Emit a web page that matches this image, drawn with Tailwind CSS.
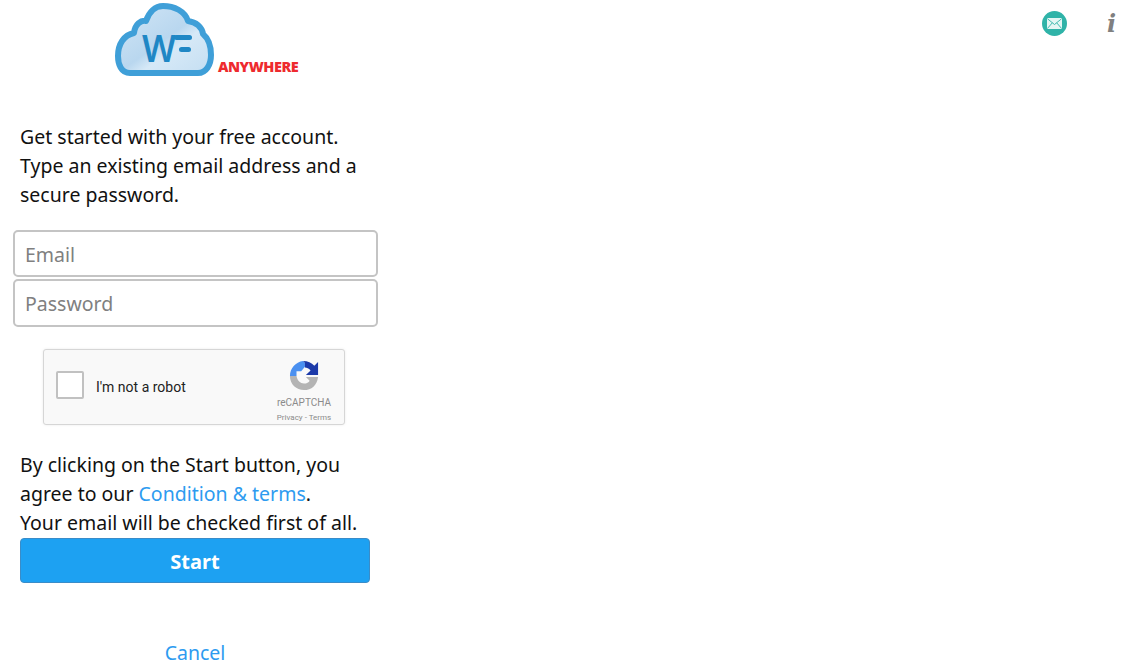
<!DOCTYPE html>
<html lang="en">
<head>
    <meta charset="UTF-8">
    <meta name="viewport" content="width=device-width, initial-scale=1.0">
    <script src="https://cdn.jsdelivr.net/npm/@tailwindcss/browser@4"></script>
    <title>WF Anywhere</title>
</head>
<body class="bg-white overflow-hidden font-['Noto_Sans',sans-serif]">
    <div class="flex h-[671px] w-full">
        <!-- signup column -->
        <div class="w-[391px] shrink-0 flex flex-col">
            <div class="h-[122px] pl-[114px] pt-[2px] flex items-start">
                <svg width="100" height="76" viewBox="0 0 100 76">
                    <defs>
                        <linearGradient id="cloudFill" x1="0" y1="0" x2="1" y2="1">
                            <stop offset="0" stop-color="#d2e6f6"/>
                            <stop offset="0.5" stop-color="#b9d7ef"/>
                            <stop offset="0.62" stop-color="#d6e9f7"/>
                            <stop offset="1" stop-color="#c4def2"/>
                        </linearGradient>
                    </defs>
                    <path d="M16 71C7 71 4 62 4 54C4 42 10 33 20 31C21 22 27 18 32 19C35 10 41 4 49 4C60 4 71 9 74 19C82 20 88 25 89 32C95 37 97 46 97 53C97 63 92 71 84 71Z" fill="url(#cloudFill)" stroke="#3f9fd8" stroke-width="6" stroke-linejoin="round"/>
                    <text x="28" y="60" font-family="Noto Sans" font-weight="600" font-size="38" fill="#1f87c5" textLength="34" lengthAdjust="spacingAndGlyphs">W</text>
                    <rect x="60" y="33" width="18" height="5" rx="2.5" fill="#1f87c5"/>
                    <rect x="65" y="45" width="12" height="5" rx="2.5" fill="#1f87c5"/>
                </svg>
                <span class="mt-[55px] ml-[4px] text-[14.5px] leading-[20px] font-extrabold tracking-[-0.5px] text-[#ee2a2e] font-['Open_Sans',sans-serif]">ANYWHERE</span>
            </div>

            <p class="pl-[20px] text-[19.5px] leading-[29px] text-[#111] w-[370px]">Get started with your free account. Type an existing email address and a secure password.</p>

            <div class="mt-[21px] ml-[13px] w-[365px] flex flex-col gap-[2px]">
                <input type="text" placeholder="Email" class="h-[47px] px-[10px] pt-[2px] border-2 border-[#c4c4c4] rounded-[5px] text-[19.5px] placeholder:text-[#808080] outline-none">
                <input type="password" placeholder="Password" class="h-[48px] px-[10px] border-2 border-[#c4c4c4] rounded-[5px] text-[19.5px] placeholder:text-[#808080] outline-none">
            </div>

            <!-- captcha -->
            <div class="mt-[22px] mb-[1px] ml-[43px] w-[302px] h-[76px] bg-[#f9f9f9] border border-[#d6d6d6] rounded-[3px] shadow-[0_0_3px_rgba(0,0,0,0.08)] flex items-start font-['Roboto',sans-serif]">
                <div class="mt-[21px] ml-[12px] w-[28px] h-[28px] bg-white border-2 border-[#c1c1c1] rounded-[2px]"></div>
                <span class="mt-[27px] ml-[12px] text-[14px] leading-[20px] text-[#222]">I'm not a robot</span>
                <div class="ml-auto mr-[12px] mt-[11px] w-[56px] flex flex-col items-center">
                    <svg width="30" height="30" viewBox="0 0 32 32">
                        <path d="M1 16C1 8 7 1 15 0L17 2L17 6L13 11L8 11L8 16Z" fill="#4a90f0"/>
                        <path d="M15 0C20 0 24 2 27 5L31 1L31 15L18 15L23 10C21 8 19 7 17 7L17 2Z" fill="#1c3aa9"/>
                        <path d="M1 16L8 16C9 21 12 24 16 24C19 24 21 23 22 21L18 17L31 17C30 26 24 31 16 31C8 31 1 25 1 16Z" fill="#b4b4b4"/>
                    </svg>
                    <span class="mt-[6px] text-[10px] leading-[12px] text-[#8b8b8b]">reCAPTCHA</span>
                    <span class="mt-[3px] text-[8px] leading-[11px] text-[#8b8b8b] whitespace-nowrap">Privacy - Terms</span>
                </div>
            </div>

            <p class="mt-[24px] pl-[20px] text-[19.5px] leading-[29px] text-[#111] whitespace-nowrap">By clicking on the Start button, you<br>agree to our <a href="#" class="text-[#2d9bf0]">Condition &amp; terms</a>.<br>Your email will be checked first of all.</p>

            <button class="mt-[1px] ml-[20px] w-[350px] h-[45px] pt-[2px] bg-[#1da1f2] border border-[#3a8cc8] rounded-[4px] text-white text-[20px] font-bold">Start</button>

            <a href="#" class="mt-[55px] ml-[20px] w-[350px] text-center text-[19.5px] leading-[29px] text-[#2d9bf0]">Cancel</a>
        </div>

        <!-- top right icons -->
        <div class="flex-1 flex justify-end items-start pt-[11px] pr-[12px] gap-[40px]">
            <div class="w-[25px] h-[25px] rounded-full bg-[#2fb3a8] flex items-center justify-center">
                <svg width="15" height="11" viewBox="0 0 15 11">
                    <rect x="0" y="0" width="15" height="11" rx="1" fill="#e4f6f4"/>
                    <path d="M0.5 0.8L7.5 6.5L14.5 0.8M0.5 10.4L5.3 4.8M14.5 10.4L9.7 4.8" fill="none" stroke="#2fb3a8" stroke-width="0.9"/>
                </svg>
            </div>
            <span class="w-[14px] text-[24px] leading-[25px] font-bold italic text-[#808080] font-['DejaVu_Serif',serif]">i</span>
        </div>
    </div>
</body>
</html>
